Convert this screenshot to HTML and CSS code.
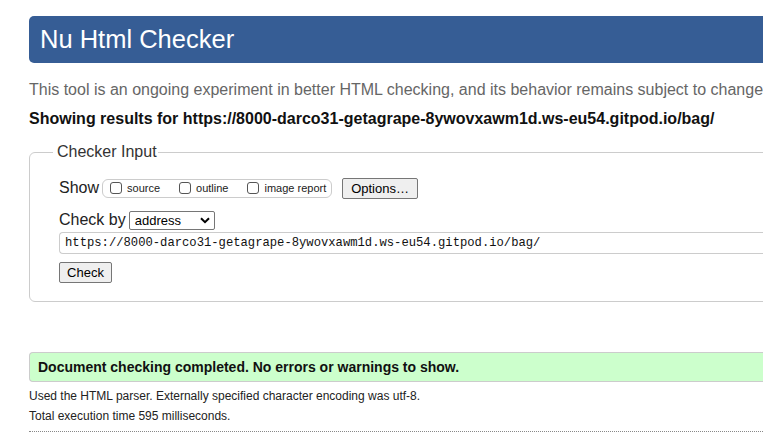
FILE: index.html
```html
<!DOCTYPE html>
<html lang="en">
<head>
<meta charset="utf-8">
<title>Nu Html Checker</title>
<link rel="stylesheet" href="styles.css">
</head>
<body>
<div class="page">
  <h1 class="title">Nu Html Checker</h1>
  <p class="intro">This tool is an ongoing experiment in better HTML checking, and its behavior remains subject to change</p>
  <p class="showing">Showing results for https://8000-darco31-getagrape-8ywovxawm1d.ws-eu54.gitpod.io/bag/</p>
  <fieldset class="checker">
    <legend>Checker Input</legend>
    <div class="row">
      <span class="lbl">Show</span>
      <span class="group">
        <label class="opt"><span class="cb"></span>source</label>
        <label class="opt"><span class="cb"></span>outline</label>
        <label class="opt"><span class="cb"></span>image report</label>
      </span>
      <span class="btn options">Options…</span>
    </div>
    <div class="row row2">
      <span class="lbl">Check by</span>
      <span class="select">address<svg width="10" height="7" viewBox="0 0 10 7"><path d="M1 1.2 L5 5.2 L9 1.2" fill="none" stroke="#000" stroke-width="2"/></svg></span>
    </div>
    <div class="url">https://8000-darco31-getagrape-8ywovxawm1d.ws-eu54.gitpod.io/bag/</div>
    <span class="btn check">Check</span>
  </fieldset>
  <p class="success">Document checking completed. No errors or warnings to show.</p>
  <p class="details first">Used the HTML parser. Externally specified character encoding was utf-8.</p>
  <p class="details">Total execution time 595 milliseconds.</p>
  <div class="rule"></div>
</div>
</body>
</html>
```
FILE: styles.css
```css
html { overflow: hidden; }
body {
  margin: 0;
  font-family: "Liberation Sans", Arial, sans-serif;
  color: #222;
  background: #fff;
}
.page {
  width: 900px;
  padding: 16px 0 0 29px;
}
.title {
  margin: 0;
  height: 47px;
  box-sizing: border-box;
  background: #365d95;
  color: #fff;
  font-weight: normal;
  font-size: 25.5px;
  line-height: 47px;
  padding-left: 11px;
  border-radius: 5px 0 0 5px;
}
.intro {
  margin: 17px 0 0;
  font-size: 16px;
  line-height: 20px;
  color: #666;
  white-space: nowrap;
}
.showing {
  margin: 9px 0 0;
  font-size: 16px;
  line-height: 20px;
  font-weight: bold;
  color: #111;
  white-space: nowrap;
}
.checker {
  margin: 14px 0 0;
  padding: 16px 0 16px 29px;
  border: 1px solid #ccc;
  border-radius: 6px;
  min-width: 0;
  height: 159px;
  box-sizing: border-box;
}
.checker legend {
  font-size: 16px;
  color: #333;
  padding: 0 1px 0 4px;
  margin-left: -6px;
}
.row {
  display: flex;
  align-items: center;
  height: 22px;
}
.lbl {
  font-size: 16px;
  color: #222;
  margin-right: 3px;
}
.group {
  display: flex;
  align-items: center;
  height: 19px;
  border: 1px solid #ccc;
  border-radius: 6px;
  padding: 0 0 0 7px;
  box-sizing: border-box;
  width: 230px;
  gap: 19px;
}
.opt {
  display: flex;
  align-items: center;
  font-size: 11px;
  color: #222;
}
.cb {
  width: 12px;
  height: 12px;
  box-sizing: border-box;
  border: 1px solid #555;
  border-radius: 3px;
  margin-right: 5px;
}
.btn {
  display: inline-block;
  font-size: 13px;
  color: #000;
  background: #efefef;
  border: 1px solid #767676;
  border-radius: 2px;
  box-sizing: border-box;
  height: 21px;
  line-height: 19px;
  text-align: center;
}
.options {
  margin-left: 10px;
  width: 76px;
}
.row2 { margin-top: 11px; height: 20px; }
.select {
  display: flex;
  align-items: center;
  justify-content: space-between;
  width: 86px;
  height: 19px;
  box-sizing: border-box;
  border: 1px solid #767676;
  border-radius: 2px;
  font-size: 13px;
  padding: 0 4px 0 5px;
  color: #000;
}
.url {
  margin-top: 2px;
  height: 22px;
  box-sizing: border-box;
  border: 1px solid #ccc;
  border-right: none;
  border-radius: 4px 0 0 4px;
  font-family: "Liberation Mono", "DejaVu Sans Mono", monospace;
  font-size: 12.2px;
  line-height: 20px;
  padding-left: 5px;
  color: #111;
}
.check {
  margin-top: 8px;
  width: 53px;
}
.success {
  margin: 50px 0 0;
  height: 30px;
  box-sizing: border-box;
  background: #ccffcc;
  border: 1px solid #ccc;
  border-right: none;
  border-radius: 4px 0 0 4px;
  font-weight: bold;
  font-size: 14px;
  line-height: 28px;
  padding-left: 8px;
  color: #111;
}
.details {
  margin: 4px 0 0;
  font-size: 12px;
  line-height: 16px;
  color: #222;
}
.details.first { margin-top: 6px; }
.rule {
  margin-top: 7px;
  border-top: 1px dotted #888;
}
```
